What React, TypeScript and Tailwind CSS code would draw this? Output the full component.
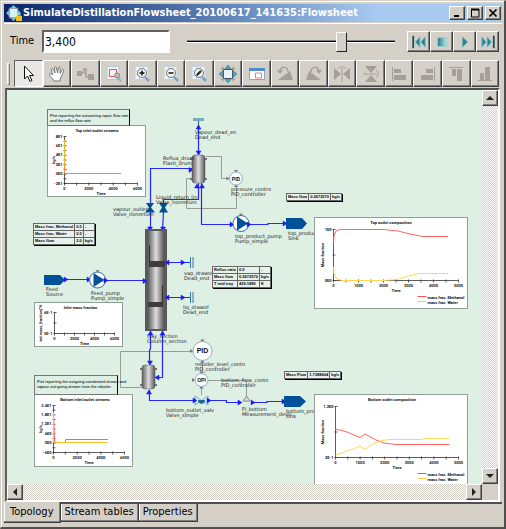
import type { ReactNode } from "react";

const raised =
  "bg-[#d4d0c8] border border-t-white border-l-white border-r-[#404040] border-b-[#404040] shadow-[inset_-1px_-1px_0_#808080]";
const dither =
  "bg-[repeating-conic-gradient(#d4d0c8_0_25%,#ffffff_0_50%)] bg-[length:2px_2px]";

/* ---------- toolbar icons ---------- */

const Icon = ({ children, size = 18 }: { children: ReactNode; size?: number }) => (
  <svg width={size} height={size} viewBox="0 0 18 18" aria-hidden="true" className="shrink-0">
    {children}
  </svg>
);

const Lens = ({ children }: { children?: ReactNode }) => (
  <>
    <path d="M2 1.500h13v13h-13zM2 6h13M2 10h13M6.500 1.500v13M10.500 1.500v13" fill="#edf4fa" stroke="#c5d3e3" />
    <path d="M12 12l4 4" stroke="#7f9fc8" strokeWidth="2.500" />
    <circle cx="9" cy="8" r="4.500" fill="#f4f4ee" stroke="#777" />
    {children}
  </>
);

const g = "#a3a09a";

const tools: { name: string; icon: ReactNode }[] = [
  { name: "Select", icon: <path d="M5.500 1v13l3-3 2.500 5.500 2-1-2.500-5h4z" fill="#fff" stroke="#111" /> },
  {
    name: "Pan",
    icon: (
      <path
        d="M6 16c-.5-2-4.500-5-4.500-6.500s2-1.500 3 .5L3.500 5c0-1.500 1.500-1.800 2-.4L7 8 6.500 3c0-1.500 1.800-1.500 2 0L9.500 8l1-5c.3-1.300 2-1 1.800.4L12 8.500l2-3.500c.7-1.200 2-.5 1.700.7-.8 2.300-1.700 5.300-3.200 7.300l-.5 3z"
        fill="#fff"
        stroke="#777"
      />
    ),
  },
  {
    name: "Connect",
    icon: (
      <>
        <path d="M4 8h4v-4h2v8h3" fill="none" stroke={g} strokeWidth="1.500" />
        <path d="M1 6h5v5h-5zM12 9h6v6h-6z" fill={g} />
      </>
    ),
  },
  {
    name: "Zoom to selection",
    icon: (
      <>
        <path d="M2 1.500h12v13h-12z" fill="#eef3f7" stroke="#bac7d2" />
        <path d="M4.500 4.500h7v7h-7z" fill="#faf2f2" stroke="#e15656" />
        <path d="M12 12l4 4" stroke="#9ba7b6" strokeWidth="2" />
        <circle cx="12" cy="10.500" r="2.500" fill="#bbb" stroke="#888" />
      </>
    ),
  },
  { name: "Zoom in", icon: <Lens><path d="M6.500 8h5M9 5.500v5" stroke="#111" strokeWidth="1.500" /></Lens> },
  { name: "Zoom out", icon: <Lens><path d="M6.500 8h5" stroke="#111" strokeWidth="1.500" /></Lens> },
  { name: "Reset zoom", icon: <Lens><path d="M6.500 11v-2l3.500-3.500h1.500v1.500l-4 4z" fill="#222" /></Lens> },
  {
    name: "Fit to window",
    icon: (
      <>
        <path d="M4.500 4.500h9v9h-9z" fill="#e6f4f8" stroke="#456" />
        <path d="M9 0l3 3.500h-6zM9 18l3-3.500h-6zM0 9l3.500-3v6zM18 9l-3.500-3v6z" fill="#4fa9b8" stroke="#28707e" strokeWidth=".5" />
        <path d="M3 5v-2h2M15 5v-2h-2M3 13v2h2M15 13v2h-2" stroke="#888" fill="none" />
      </>
    ),
  },
  {
    name: "Overview",
    icon: (
      <>
        <path d="M1.500 3.500h15v11h-15z" fill="#fff" stroke="#8aa9c9" />
        <path d="M1 3h16v3h-16z" fill="#4c8ccf" />
        <path d="M7.500 8h6v5h-6z" fill="#fff" stroke="#e78080" />
      </>
    ),
  },
  {
    name: "Rotate left",
    icon: (
      <>
        <path d="M2 15h15l-3-9z" fill={g} />
        <path d="M4 6c1-5 8-5 8 1" fill="none" stroke={g} strokeWidth="1.500" />
        <path d="M1 5h6l-3 4z" fill={g} />
      </>
    ),
  },
  {
    name: "Rotate right",
    icon: (
      <>
        <path d="M1 15h15l-12-9z" fill={g} />
        <path d="M6 7c0-6 7-6 8-1" fill="none" stroke={g} strokeWidth="1.500" />
        <path d="M11 5h6l-3 4z" fill={g} />
      </>
    ),
  },
  {
    name: "Flip horizontally",
    icon: (
      <>
        <path d="M1 3l7 6-7 6zM17 3l-7 6 7 6z" fill={g} />
        <path d="M9 3v14M5 4c1-3 6-3 8 0" fill="none" stroke={g} />
      </>
    ),
  },
  {
    name: "Flip vertically",
    icon: (
      <>
        <path d="M3 1h12l-6 7zM3 17h12l-6-7z" fill={g} />
        <path d="M1 9h14M14 5c3 1 3 6 0 8" fill="none" stroke={g} />
      </>
    ),
  },
  { name: "Align left", icon: <><path d="M2.500 2v14" stroke={g} /><path d="M4 4h7v4h-7zM4 10h12v5h-12z" fill={g} /></> },
  { name: "Align right", icon: <><path d="M15.500 2v14" stroke={g} /><path d="M7 4h7v4h-7zM2 10h12v5h-12z" fill={g} /></> },
  { name: "Align top", icon: <><path d="M2 2.500h14" stroke={g} /><path d="M5 4h4v7h-4zM10 4h5v12h-5z" fill={g} /></> },
  { name: "Align bottom", icon: <><path d="M2 15.500h14" stroke={g} /><path d="M4 8h4v7h-4zM9 2h5v13h-5z" fill={g} /></> },
];

const teal = "#1c8796";
const players: { name: string; icon: ReactNode }[] = [
  {
    name: "To start",
    icon: (
      <>
        <path d="M2.500 2v14" stroke="#1d4f5a" strokeWidth="2" />
        <path d="M10 3l-5 6 5 6zM16 3l-5 6 5 6z" fill={teal} stroke="#8ab8c2" />
      </>
    ),
  },
  { name: "Stop", icon: <path d="M4 4h10v10h-10z" fill="url(#stop)" stroke="#9cc" /> },
  { name: "Play", icon: <path d="M6 3l6 6-6 6z" fill={teal} stroke="#8ab8c2" /> },
  {
    name: "To end",
    icon: (
      <>
        <path d="M15.500 2v14" stroke="#1d4f5a" strokeWidth="2" />
        <path d="M2 3l5 6-5 6zM8 3l5 6-5 6z" fill={teal} stroke="#8ab8c2" />
      </>
    ),
  },
];

/* ---------- flowsheet parts ---------- */

const Label = ({ x, y, lines }: { x: number; y: number; lines: string[] }) => (
  <text x={x} y={y} className="font-['DejaVu_Sans',sans-serif] text-[5px]" fill="#222">
    {lines.map((l, i) => (
      <tspan key={l} x={x} dy={i ? 5 : 0}>{l}</tspan>
    ))}
  </text>
);

const Head = ({ x, y, dir }: { x: number; y: number; dir: "l" | "r" | "u" | "d" }) => {
  const d = {
    r: `M${x} ${y}l-4 -2.500v5z`,
    l: `M${x} ${y}l4 -2.500v5z`,
    u: `M${x} ${y}l-2.500 4h5z`,
    d: `M${x} ${y}l-2.500 -4h5z`,
  }[dir];
  return <path d={d} fill="#1a1aff" stroke="#1a1aff" strokeWidth=".5" />;
};

const Pump = ({ x, y }: { x: number; y: number }) => (
  <g>
    <path d={`M${x - 2} ${y - 10}h4l-2 3z`} fill="#888" />
    <circle cx={x} cy={y} r="8" fill="#fff" stroke="#2b6cab" />
    <path d={`M${x - 4} ${y - 7}l11 7l-11 7z`} fill="#00509a" />
  </g>
);

const Vessel = ({ x, y, h }: { x: number; y: number; h: number }) => (
  <g>
    <path d={`M${x - 2} ${y + 4}h17M${x - 2} ${y + h - 4}h17`} stroke="#777" strokeWidth="2" />
    <rect x={x} y={y} width="13" height={h} rx="3" fill="url(#steel)" stroke="#555" strokeWidth=".5" />
  </g>
);

const Controller = ({ x, y, r, text }: { x: number; y: number; r: number; text: string }) => (
  <g>
    <path d={`M${x - 2} ${y - r - 2}h4l-2 3zM${x - 2} ${y + r + 2}h4l-2 -3zM${x - r - 3} ${y - 2}v4l3 -2z`} fill="#777" />
    <circle cx={x} cy={y} r={r} fill="#fff" stroke="#8eafc4" />
    <text
      x={x}
      y={y + 2}
      textAnchor="middle"
      fill="#111"
      className={r > 8 ? "font-['Liberation_Sans',sans-serif] text-[7px] font-bold" : "font-['Liberation_Sans',sans-serif] text-[5px] font-bold"}
    >
      {text}
    </text>
  </g>
);

const tiny = "font-['Roboto','Liberation_Sans',sans-serif] text-[4px] font-bold";

type ChartProps = {
  card: [number, number, number, number];
  plot: [number, number, number, number];
  title: string;
  yTitle: string;
  yTitleX: number;
  xTicks: string[];
  yTicks: string[];
  series: { color: string; points: string }[];
  legend?: boolean;
};

const Chart = ({ card, plot, title, yTitle, yTitleX, xTicks, yTicks, series, legend }: ChartProps) => {
  const [cx, cy, cw, ch] = card;
  const [l, t, r, b] = plot;
  const nx = (xTicks.length - 1) * 2;
  const ny = (yTicks.length - 1) * 2;
  const ticks = [
    ...Array.from({ length: nx + 1 }, (_, i) => `M${l + ((r - l) * i) / nx} ${b - 1}v3`),
    ...Array.from({ length: ny + 1 }, (_, i) => `M${l - 1} ${t + ((b - t) * i) / ny}h3`),
  ].join("");
  return (
    <g className={tiny} fill="#111">
      <rect x={cx} y={cy} width={cw} height={ch} fill="#fff" stroke="#8f9f97" />
      <text x={(l + r) / 2 - (legend ? 5 : 4)} y={cy + 6} textAnchor="middle">{title}</text>
      <path d={`M${l} ${t}V${b}H${r}${ticks}`} fill="none" stroke="#333" strokeWidth=".8" />
      {xTicks.map((v, i) => (
        <text key={v} x={l + ((r - l) * i) / (xTicks.length - 1)} y={b + 6} textAnchor="middle">{v}</text>
      ))}
      {yTicks.map((v, i) => (
        <text key={v} x={l - 2} y={t + 1 + ((b - t) * i) / (yTicks.length - 1)} textAnchor="end">{v}</text>
      ))}
      <text x={(l + r) / 2} y={b + 11} textAnchor="middle">Time</text>
      <text transform={`translate(${yTitleX} ${(t + b) / 2}) rotate(-90)`} textAnchor="middle">{yTitle}</text>
      {series.map((s) => (
        <polyline key={s.color} points={s.points} fill="none" stroke={s.color} />
      ))}
      {legend && (
        <>
          <path d={`M${cx + 103} ${cy + ch - 12}h9`} stroke="#f55" />
          <path d={`M${cx + 103} ${cy + ch - 7}h9`} stroke="#fc4" />
          <text x={cx + 113} y={cy + ch - 10}>mass frac. Methanol</text>
          <text x={cx + 113} y={cy + ch - 5}>mass frac. Water</text>
        </>
      )}
    </g>
  );
};

const DataTable = ({ place, rows }: { place: string; rows: string[][] }) => (
  <table
    className={`absolute border-collapse bg-[#e8f2ea] font-['Liberation_Sans',sans-serif] text-[4px] font-bold leading-[6px] text-black shadow-[1px_1px_0_#000] ${place}`}
  >
    <tbody>
      {rows.map((r) => (
        <tr key={r[0]}>
          {r.map((c, i) => (
            <td key={i} className="whitespace-nowrap border border-[#666] px-px py-0">{c}</td>
          ))}
        </tr>
      ))}
    </tbody>
  </table>
);

const Note = ({ place, children }: { place: string; children: ReactNode }) => (
  <p
    className={`absolute whitespace-nowrap border border-r-black border-[#777] pl-[2px] pt-[3px] font-['Roboto','Liberation_Sans',sans-serif] text-[4px] leading-[5px] text-black ${place}`}
  >
    {children}
  </p>
);

const Flowsheet = () => (
  <div className="relative min-w-0 flex-1 overflow-hidden bg-[#deefe4]">
    <svg width="475" height="395" viewBox="7 90 475 395" className="block max-w-none" role="img" aria-label="Distillation flowsheet">
      <defs>
        <linearGradient id="steel">
          <stop offset="0" stopColor="#5c5c5c" />
          <stop offset=".5" stopColor="#dedede" />
          <stop offset="1" stopColor="#555" />
        </linearGradient>
      </defs>

      {/* control signals */}
      <path
        d="M206 156.500H221.500V178.500H230M193 178.500H186.500V208.500H236.500V186M194 351.500H120.500V387.500H144M202.500 360V373M201.500 386V395M208 380.500H246.500V398"
        fill="none"
        stroke="#979d99"
      />
      {/* process streams */}
      <path
        d="M198.500 121V155M150.500 205V168.500H193M198.500 183V199.500H163.500V205M201.500 183V224.500H234M249 224.500H268V223.500H286M150.500 212V230M163.500 212L162.500 230M166 262.500H190M166 297.500H190M65 279.500H90M106 280.500H146M150.500 331V349L149.500 350V364M162.500 331V377.500H155M149.500 390V400.500H194M209 400.500H226.500V402.500H240M254 402.500H267V401.500H284"
        fill="none"
        stroke="#2626ff"
        strokeWidth="1.200"
      />
      <Head x={198.5} y={125} dir="u" />
      <Head x={198.5} y={155} dir="d" />
      <Head x={193} y={170} dir="r" />
      <Head x={234} y={224.5} dir="r" />
      <Head x={287} y={223.5} dir="r" />
      <Head x={150} y={231} dir="d" />
      <Head x={163} y={231} dir="d" />
      <Head x={91} y={279.5} dir="r" />
      <Head x={68} y={279.5} dir="r" />
      <Head x={185} y={262.5} dir="r" />
      <Head x={185} y={297.5} dir="r" />
      <Head x={286} y={401.5} dir="r" />
      <Head x={242} y={402.5} dir="r" />
      <Head x={255} y={402.5} dir="r" />
      <path d="M193 118h11v3h-11z" fill="#7ba9be" />
      <path d="M198.500 121v4" stroke="#3a7aa0" />
      <path d="M190.500 257v11M193 257v11M190.500 292v11M193 292v11" stroke="#3878a2" />

      {/* vessels and column */}
      <Vessel x={192} y={155} h={28} />
      <Vessel x={142} y={365} h={24} />
      <path d="M145 229h22v102h-22z" fill="#5a5a5a" />
      <path d="M148 231h16v98h-16z" fill="url(#steel)" />
      <path d="M149 261h16v6h-16zM148 302h15v5h-15z" fill="#3d3d3d" />
      <path d="M149.500 245v17M162.500 285v18" stroke="#333" />
      <Head x={197} y={184} dir="u" />
      <Head x={202} y={184} dir="u" />
      <Head x={147} y={281} dir="r" />
      <Head x={165} y={262.5} dir="l" />
      <Head x={165} y={297.5} dir="l" />
      <Head x={150.5} y={331} dir="u" />
      <Head x={162.5} y={331} dir="u" />
      <Head x={150} y={365} dir="d" />
      <Head x={155} y={377.5} dir="l" />
      <Head x={149} y={390} dir="u" />

      {/* pumps, valves, terminals */}
      <Pump x={241} y={223.5} />
      <Pump x={97.5} y={280} />
      <Head x={251} y={224.5} dir="r" />
      <Head x={108} y={280.5} dir="r" />
      <path d="M146 203h8l-3 4.500 4 5h-10l4-5zM159 203h9l-3 4.500 3 5h-9l3-5z" fill="#00508f" />
      <path d="M286 218h16l5 5.500-5 5.500h-16zM44 275h16l5 5-5 5h-16zM284 396h16l6 5.500-6 5.500h-16z" fill="#00509a" />
      <path d="M195 396l13 9v-9l-13 9z" fill="#d9eef6" stroke="#5590ac" strokeWidth=".7" />
      <path d="M198 400h7c0 5-7 5-7 0z" fill="#186a94" />
      <Head x={197} y={400.5} dir="r" />
      <Head x={211} y={400.5} dir="r" />
      <path d="M243 401h7l-3.500-5z" fill="#ddd" stroke="#888" />
      <Controller x={236} y={178.5} r={6.5} text="PID" />
      <Controller x={202.5} y={351} r={9.5} text="PID" />
      <Controller x={201.5} y={380} r={6.5} text="OPI" />

      <Label x={195} y={134} lines={["Vapour_dead_en", "Dead_end"]} />
      <Label x={163} y={160} lines={["Reflux_drum", "Flash_drum"]} />
      <Label x={231} y={191} lines={["pressure_contro", "PID_controller"]} />
      <Label x={156} y={199} lines={["Liquid_return_lin", "Valve_nonreturn"]} />
      <Label x={113} y={211} lines={["vapour_outlet", "Valve_nonreturn"]} />
      <Label x={235} y={238} lines={["top_product_pump", "Pump_simple"]} />
      <Label x={288} y={235} lines={["top_produc", "Sink"]} />
      <Label x={184} y={275} lines={["vap_drawof", "Dead_end"]} />
      <Label x={183} y={309} lines={["liq_drawof", "Dead_end"]} />
      <Label x={46} y={291} lines={["Feed", "Source"]} />
      <Label x={91} y={295} lines={["Feed_pump", "Pump_simple"]} />
      <Label x={147} y={338} lines={["tray_section", "Column_section"]} />
      <Label x={195} y={366} lines={["reboiler_level_contn", "PID_controller"]} />
      <Label x={221} y={382} lines={["bottom_flow_contn", "PID_controller"]} />
      <Label x={166} y={412} lines={["bottom_outlet_valv", "Valve_simple"]} />
      <Label x={242} y={411} lines={["FI_bottom", "Measurement_devic"]} />
      <Label x={286} y={413} lines={["bottom_produc", "sink"]} />

      {/* plots */}
      <Chart
        card={[47.5, 125.5, 98, 71]}
        plot={[64.5, 136.5, 137.5, 183.5]}
        title="Top inlet/outlet streams"
        yTitle="kg/s"
        yTitleX={55}
        xTicks={["0", "2000", "4000", "6000"]}
        yTicks={["8E1", "6E1", "4E1", "2E1", "0E0", "-2E1"]}
        series={[
          { color: "#e8b820", points: "64.5,140 64.5,173" },
          { color: "#ff8c30", points: "64.5,165 64.5,173.5 121,173.5" },
        ]}
      />
      <Chart
        card={[34.5, 302.5, 88, 44]}
        plot={[54.5, 312.5, 114.5, 333.5]}
        title="Inlet mass fraction"
        yTitle="tot.mass_fraction[&quot;H"
        yTitleX={42}
        xTicks={["0", "2000", "4000", "6000"]}
        yTicks={["6E-1", "5E-1"]}
        series={[{ color: "#b83030", points: "55,333.5 101,333.5" }]}
      />
      <Chart
        card={[34.5, 394.5, 98, 72]}
        plot={[53.5, 405.5, 124.5, 452.5]}
        title="Bottom inlet/outlet streams"
        yTitle="kg/s"
        yTitleX={42}
        xTicks={["0", "2000", "4000", "6000"]}
        yTicks={["2.4E1", "1.8E1", "1.2E1", "6E0", "0E0", "-6E0"]}
        series={[
          { color: "#ff6060", points: "53.5,414 54.5,441 56,442.5 65.5,442.5 65.5,439.5 108,439.5" },
          { color: "#ffbe30", points: "53.5,412 53.5,442.5 108,442.5" },
        ]}
      />
      <Chart
        card={[314.5, 217.5, 153, 91]}
        plot={[333.5, 229.5, 458.5, 280.5]}
        title="Top outlet composition"
        yTitle="Mass fraction"
        yTitleX={324}
        xTicks={["0", "1000", "2000", "3000", "4000", "5000"]}
        yTicks={["1E0", "0E0"]}
        legend
        series={[
          { color: "#ff6464", points: "333.5,243 334,236 336,231 340,229.5 384,229.5 398,231 410,234 423,236.500 448,236.5" },
          { color: "#ffd75a", points: "333.5,267 334,274 337,279 342,280.500 384,280.5 397,279.5 408,276 419,273.5 448,273.5" },
        ]}
      />
      <Chart
        card={[314.5, 394.5, 153, 91]}
        plot={[335.5, 406.5, 458.5, 457.5]}
        title="Bottom outlet composition"
        yTitle="Mass fraction"
        yTitleX={324}
        xTicks={["0", "1000", "2000", "3000", "4000", "5000"]}
        yTicks={["1.2E0", "2E-1"]}
        legend
        series={[
          { color: "#ff6464", points: "335.5,429.5 340,430 347,432 360,437.5 365,434 376,440 384,443 396,444.5 449,444.5" },
          { color: "#ffd75a", points: "335.5,455 342,453 349,450 354,449 360,446 365,449.500 374,443 382,440.5 390,439.500 422,439.5 424,438.500 449,438.5" },
        ]}
      />
    </svg>
    <Note place="left-[40px] top-[19px] h-[17px] w-[83px]">
      Plot reporting the outcoming vapor flow rate
      <br />
      and the reflux flow rate.
    </Note>
    <Note place="left-[27px] top-[285px] h-[20px] w-[84px]">
      Plot reporting the outgoing condensed stream and
      <br />
      vapour out-going stream from the reboiler
    </Note>
    <DataTable
      place="left-[26px] top-[133px] w-[61px]"
      rows={[
        ["Mass frac. Methanol", "0.5", "-"],
        ["Mass frac. Water", "0.5", "-"],
        ["Mass flow", "2.0", "kg/s"],
      ]}
    />
    <DataTable
      place="left-[205px] top-[176px] w-[57px]"
      rows={[
        ["Reflux ratio", "0.5", "-"],
        ["Mass flow", "0.2672570", "kg/s"],
        ["T mid tray", "429.1885", "K"],
      ]}
    />
    <DataTable place="left-[279px] top-[103px] w-[55px]" rows={[["Mass flow", "0.2672570", "kg/s"]]} />
    <DataTable place="left-[277px] top-[281px] w-[53px]" rows={[["Mass Flow", "1.7388604", "kg/s"]]} />
  </div>
);

const ScrollButton = ({ label, d }: { label: string; d: string }) => (
  <button type="button" aria-label={label} className={`flex size-[16px] shrink-0 items-center justify-center ${raised}`}>
    <svg width="8" height="8" viewBox="0 0 8 8" aria-hidden="true">
      <path d={d} fill="#222" />
    </svg>
  </button>
);

const WindowButton = ({ label, children }: { label: string; children: ReactNode }) => (
  <button type="button" aria-label={label} className={`flex h-[14px] w-[16px] items-center justify-center ${raised}`}>
    <svg width="10" height="10" viewBox="0 0 10 10" aria-hidden="true" fill="none" stroke="#000">
      {children}
    </svg>
  </button>
);

const tab = "h-[18px] border-b border-r border-[#404040] px-1 shadow-[inset_-1px_-1px_0_#808080,inset_1px_0_0_#fff]";

export default function App() {
  return (
    <div className="flex h-screen flex-col border border-b-2 border-r-2 border-[#d4d0c8] border-b-[#505050] border-r-[#505050] bg-[#d4d0c8] font-['DejaVu_Sans_Condensed','DejaVu_Sans',sans-serif] text-[11px] text-black">
      <div className="flex min-h-0 flex-1 flex-col border-l border-t border-white px-[2px] pt-[2px] pb-[2px]">
        <header className="flex h-[18px] shrink-0 items-center bg-linear-to-r from-[#0a246a] to-[#a6caf0] to-75% pl-[2px] pr-px text-white">
          <svg width="16" height="16" viewBox="0 0 16 16" aria-hidden="true" className="mr-px">
            <path d="M3 3h9v10h-9z" fill="#d9f1f5" stroke="#506070" />
            <path d="M7.500 0l3 3h-6zM7.500 16l3-3h-6zM0 8l3-3v6zM15 8l-3-3v6z" fill="#78bfd0" />
            <path d="M11 11v-2h3v2" fill="none" stroke="#ddd" />
            <path d="M10 11h6v5h-6z" fill="#f0c020" />
          </svg>
          <h1 className="min-w-0 flex-1 truncate text-[11px] font-bold leading-[18px]">
            SimulateDistillationFlowsheet_20100617_141635:Flowsheet
          </h1>
          <div className="flex gap-[2px]">
            <WindowButton label="Minimize"><path d="M2 8h5" strokeWidth="2" /></WindowButton>
            <WindowButton label="Maximize"><path d="M1 1.500h8" strokeWidth="2" /><path d="M1.500 1v8h7.500v-8" /></WindowButton>
            <WindowButton label="Close"><path d="M1.500 1.500l7 7M8.500 1.500l-7 7" strokeWidth="1.700" /></WindowButton>
          </div>
        </header>

        <div className="mt-px flex h-[36px] shrink-0 items-center border-t border-white pl-[6px] pr-[3px]">
          <label htmlFor="time" className="w-[32px]">Time</label>
          <input
            id="time"
            type="text"
            defaultValue="3,400"
            className="h-[23px] w-[128px] border-2 border-b-white border-l-[#606060] border-r-white border-t-[#606060] bg-white px-px text-[12px] outline-none"
          />
          <input
            type="range"
            aria-label="Simulation time"
            min={0}
            max={4510}
            defaultValue={3400}
            className="ml-[17px] mr-[12px] h-[22px] min-w-0 flex-1 appearance-none bg-transparent [&::-webkit-slider-runnable-track]:h-[3px] [&::-webkit-slider-runnable-track]:border-b [&::-webkit-slider-runnable-track]:border-t [&::-webkit-slider-runnable-track]:border-b-white [&::-webkit-slider-runnable-track]:border-t-[#808080] [&::-webkit-slider-runnable-track]:bg-black [&::-webkit-slider-thumb]:mt-[-9px] [&::-webkit-slider-thumb]:h-[20px] [&::-webkit-slider-thumb]:w-[11px] [&::-webkit-slider-thumb]:appearance-none [&::-webkit-slider-thumb]:border [&::-webkit-slider-thumb]:border-b-[#202020] [&::-webkit-slider-thumb]:border-l-white [&::-webkit-slider-thumb]:border-r-[#202020] [&::-webkit-slider-thumb]:border-t-white [&::-webkit-slider-thumb]:bg-[#d4d0c8]"
          />
          <svg width="0" height="0" aria-hidden="true">
            <linearGradient id="stop">
              <stop offset="0" stopColor="#137b8c" />
              <stop offset="1" stopColor="#c0e0e6" />
            </linearGradient>
          </svg>
          <div className="flex">
            {players.map((p) => (
              <button key={p.name} type="button" aria-label={p.name} className={`flex h-[21px] w-[23px] items-center justify-center ${raised}`}>
                <Icon size={16}>{p.icon}</Icon>
              </button>
            ))}
          </div>
        </div>

        <div className="flex h-[29px] shrink-0 px-[3px] pt-px">
          <span className="mr-[4px] mt-[3px] h-[22px] w-[3px] border border-b-[#808080] border-l-white border-r-[#808080] border-t-white" />
          {tools.map((t, i) => (
            <button
              key={t.name}
              type="button"
              aria-label={t.name}
              className={`flex h-[27px] min-w-0 flex-1 items-center justify-center ${
                i === 0 ? "border border-b-white border-l-[#606060] border-r-white border-t-[#606060] bg-[#eae8e4]" : raised
              }`}
            >
              <Icon>{t.icon}</Icon>
            </button>
          ))}
        </div>

        <main className="ml-px mr-[2px] flex min-h-0 flex-1 flex-col border-2 border-b-white border-l-[#606060] border-r-white border-t-[#505050]">
          <div className="flex min-h-0 flex-1">
            <Flowsheet />
            <div className={`flex flex-col justify-between ${dither}`}>
              <ScrollButton label="Scroll up" d="M0 6l4-4 4 4z" />
              <ScrollButton label="Scroll down" d="M0 2l4 4 4-4z" />
            </div>
          </div>
          <div className="flex shrink-0">
            <div className={`flex flex-1 justify-between ${dither}`}>
              <ScrollButton label="Scroll left" d="M6 0l-4 4 4 4z" />
              <ScrollButton label="Scroll right" d="M2 0l4 4-4 4z" />
            </div>
            <div className="w-[16px]" />
          </div>
        </main>

        <nav className="flex h-[23px] shrink-0 items-start" role="tablist">
          <button
            type="button"
            role="tab"
            aria-selected="true"
            className="h-[21px] border-b border-r border-[#404040] px-[6px] shadow-[inset_-1px_-1px_0_#808080,inset_1px_0_0_#fff]"
          >
            Topology
          </button>
          <div className="flex flex-1 border-t-2 border-[#505050]">
            <button type="button" role="tab" aria-selected="false" className={tab}>Stream tables</button>
            <button type="button" role="tab" aria-selected="false" className={tab}>Properties</button>
          </div>
        </nav>
      </div>
    </div>
  );
}
